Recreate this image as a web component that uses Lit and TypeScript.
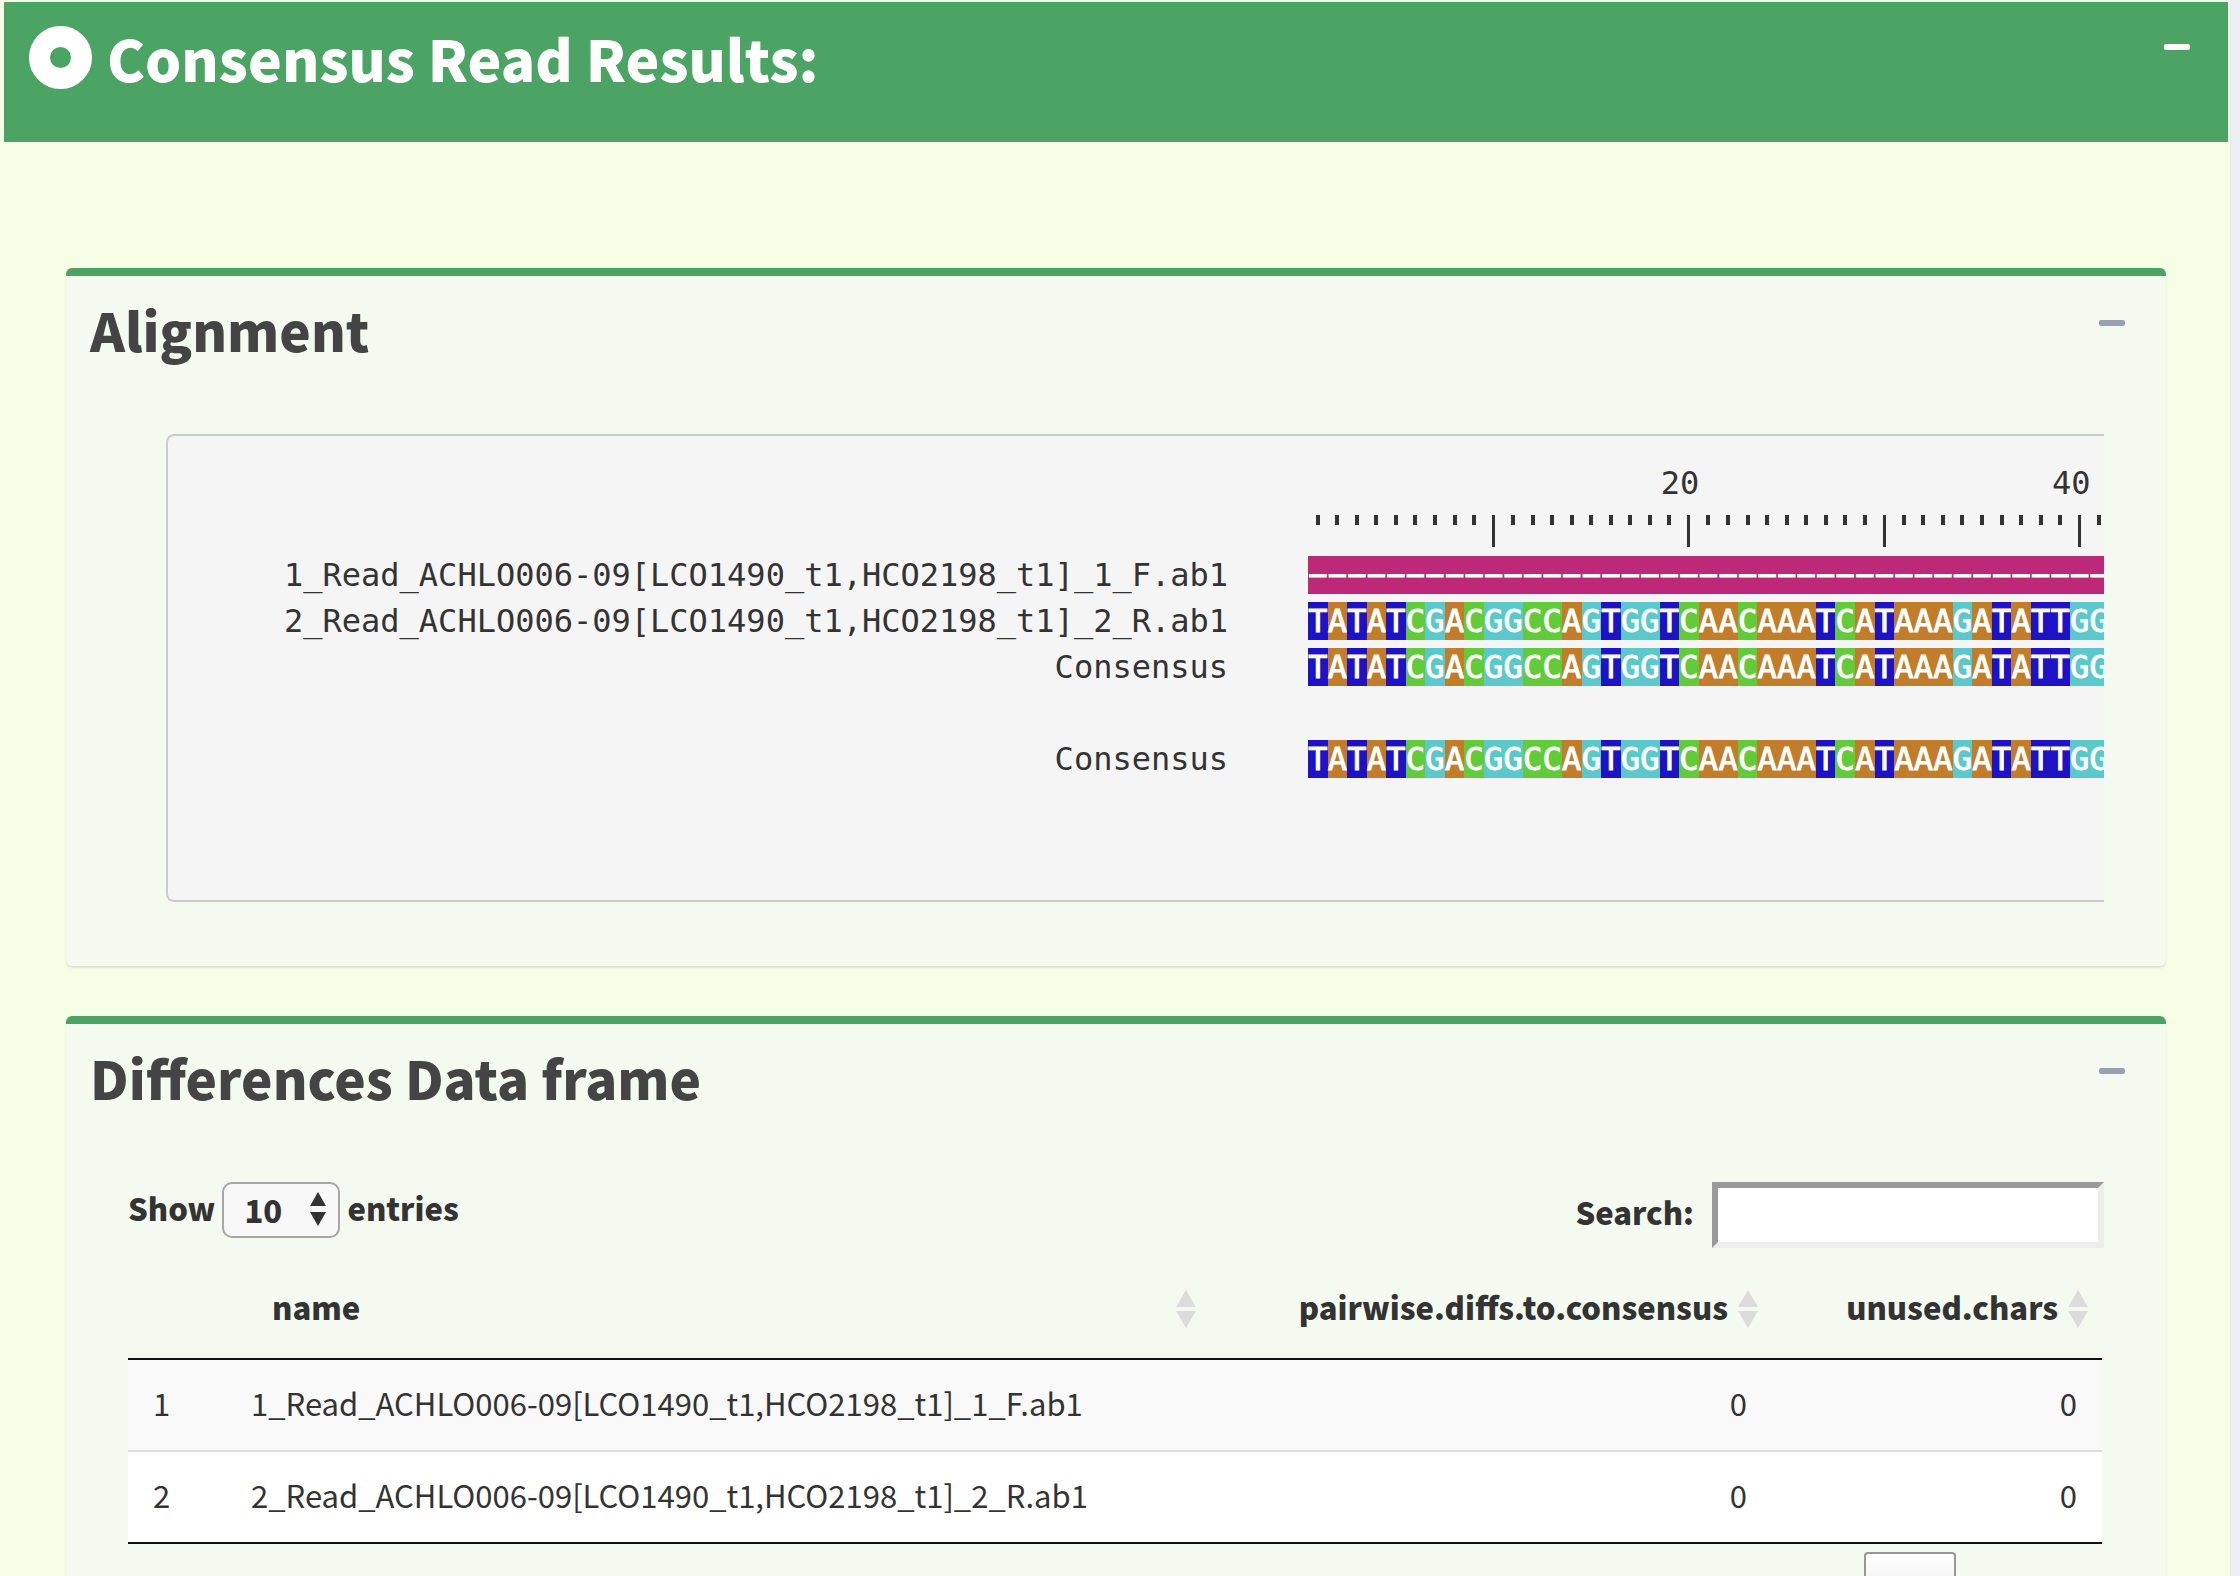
import { LitElement, html, css, svg } from "lit";
import { customElement, property } from "lit/decorators.js";

const SEQUENCE = "TATATCGACGGCCAGTGGTCAACAAATCATAAAGATATTGG";
const GAP = "−";

interface Track {
  label: string;
  bases: string;
}

const TRACKS: Track[] = [
  { label: "1_Read_ACHLO006-09[LCO1490_t1,HCO2198_t1]_1_F.ab1", bases: GAP.repeat(SEQUENCE.length) },
  { label: "2_Read_ACHLO006-09[LCO1490_t1,HCO2198_t1]_2_R.ab1", bases: SEQUENCE },
  { label: "Consensus", bases: SEQUENCE },
  { label: "", bases: "" },
  { label: "Consensus", bases: SEQUENCE },
];

const ROWS = [
  { id: 1, name: "1_Read_ACHLO006-09[LCO1490_t1,HCO2198_t1]_1_F.ab1", diffs: 0, unused: 0 },
  { id: 2, name: "2_Read_ACHLO006-09[LCO1490_t1,HCO2198_t1]_2_R.ab1", diffs: 0, unused: 0 },
];

const sortIcon = html`<svg class="sort" viewBox="0 0 20 38" aria-hidden="true">
  ${svg`<path d="M10 0 L20 17 H0 Z M0 21 H20 L10 38 Z" fill="#dcdcdc" />`}
</svg>`;

@customElement("result-card")
export class ResultCard extends LitElement {
  @property() heading = "";

  static styles = css`
    :host {
      display: block;
      border-top: 8px solid #4ba364;
      border-radius: 6px;
      background: #f4faf0;
      box-shadow: 0 2px 2px rgba(0, 0, 0, 0.1);
    }
    .head {
      display: flex;
      justify-content: space-between;
      align-items: flex-start;
      padding: 21px 41px 0 24px;
    }
    .title {
      margin: 0;
      font-size: 53px;
      line-height: 64px;
      font-weight: 900;
      color: #444;
    }
    .toggle {
      display: flex;
      padding: 23px 0;
      border: 0;
      background: none;
    }
    .bar {
      width: 26px;
      height: 6px;
      border-radius: 2px;
      background: #98a0b5;
    }
    .body {
      padding: 73px 62px 64px;
    }
  `;

  render() {
    return html`
      <div class="head">
        <h2 class="title">${this.heading}</h2>
        <button class="toggle" aria-label="Collapse"><span class="bar"></span></button>
      </div>
      <div class="body"><slot></slot></div>
    `;
  }
}

@customElement("alignment-view")
export class AlignmentView extends LitElement {
  static styles = css`
    :host {
      display: block;
      margin-left: 38px;
      overflow: hidden;
    }
    .frame {
      display: grid;
      grid-template-columns: 1060px 1fr;
      grid-auto-rows: 38px;
      gap: 8px 80px;
      padding: 28px 0 122px;
      border: 2px solid #ccc;
      border-right: 0;
      border-radius: 8px 0 0 8px;
      background: #f5f5f5;
      color: #333;
      font: 32px/38px "DejaVu Sans Mono", monospace;
    }
    .label {
      text-align: right;
      white-space: nowrap;
    }
    .track {
      display: grid;
      grid-template-columns: repeat(41, 1fr);
      width: 801px;
    }
    .base {
      text-align: center;
      color: #fff;
      -webkit-text-stroke: 1px #fff;
    }
    .T { background: #1d12c4; }
    .A { background: #c17d2a; }
    .C { background: #62cb3a; }
    .G { background: #5bc9cc; }
    .gap { background: #bd2878; }
    .number {
      display: flex;
      justify-content: flex-end;
    }
    .tick {
      justify-self: center;
      width: 4px;
      height: 10px;
      margin-top: 5px;
      background: #333;
    }
    .tick.major {
      width: 3px;
      height: 32px;
    }
  `;

  render() {
    const positions = [...SEQUENCE].map((_, i) => i + 1);
    return html`
      <div class="frame">
        <span></span>
        <div class="track">
          ${positions.map((p) => html`<span class="number">${p % 20 === 0 ? p : ""}</span>`)}
        </div>
        <span></span>
        <div class="track">
          ${positions.map((p) => html`<span class="tick ${p % 10 === 0 ? "major" : ""}"></span>`)}
        </div>
        ${TRACKS.map(
          (t) => html`
            <span class="label">${t.label}</span>
            <div class="track">
              ${[...t.bases].map((b) => html`<span class="base ${b === GAP ? "gap" : b}">${b}</span>`)}
            </div>
          `
        )}
      </div>
    `;
  }
}

@customElement("differences-table")
export class DifferencesTable extends LitElement {
  static styles = css`
    :host {
      display: block;
      color: #333;
      font-size: 31px;
      line-height: 48px;
    }
    .tools {
      display: flex;
      justify-content: space-between;
      align-items: flex-start;
      font-weight: 900;
    }
    .length {
      display: flex;
      gap: 7px;
      line-height: 52px;
    }
    .picker {
      position: relative;
      display: flex;
    }
    .select {
      appearance: none;
      width: 118px;
      height: 56px;
      padding: 0 20px;
      border: 2px solid #a6a6a6;
      border-radius: 10px;
      background: #f8f8f8;
      color: #333;
      font: inherit;
    }
    .arrows {
      position: absolute;
      top: 10px;
      right: 14px;
      width: 16px;
      height: 34px;
      pointer-events: none;
    }
    .search {
      display: flex;
      gap: 18px;
      line-height: 60px;
    }
    .input {
      box-sizing: border-box;
      width: 392px;
      height: 66px;
      padding: 0 8px;
      border: 6px solid;
      border-color: #9a9a9a #ededed #ededed #9a9a9a;
      background: #fff;
      font: inherit;
    }
    .wrap {
      padding-right: 2px;
    }
    .table {
      width: 100%;
      table-layout: fixed;
      border-collapse: separate;
      border-spacing: 0;
      border-bottom: 2px solid #111;
    }
    .id { width: 98px; }
    .diffs { width: 562px; }
    .unused { width: 330px; }
    .th {
      padding: 35px 14px 27px 46px;
      border-bottom: 2px solid #111;
      box-sizing: border-box;
    }
    .th.id,
    .th.diffs,
    .th.unused {
      padding-left: 0;
    }
    .order {
      display: flex;
      justify-content: space-between;
      align-items: center;
      gap: 10px;
      width: 100%;
      padding: 0;
      border: 0;
      background: none;
      color: inherit;
      font: inherit;
      font-weight: 900;
    }
    .diffs .order,
    .unused .order {
      justify-content: flex-end;
    }
    .sort {
      width: 20px;
      height: 38px;
      margin-top: 4px;
    }
    .td {
      padding: 19px 25px 23px;
      background: #f9f9f9;
    }
    .row + .row .td {
      border-top: 2px solid #ddd;
      background: #fff;
    }
    .num {
      text-align: right;
    }
    .pager {
      display: flex;
      justify-content: flex-end;
      padding-top: 8px;
    }
    .page {
      box-sizing: border-box;
      padding: 24px 36px;
      border: 2px solid transparent;
      border-radius: 4px;
      background: none;
      color: #333;
      font: inherit;
    }
    .page.current {
      width: 92px;
      border-color: #979797;
      background: linear-gradient(#fff, #dcdcdc);
    }
    .page.next {
      width: 148px;
    }
  `;

  render() {
    return html`
      <div class="tools">
        <div class="length">
          <label for="length">Show</label>
          <span class="picker">
            <select class="select" id="length">
              <option>10</option>
              <option>25</option>
              <option>50</option>
              <option>100</option>
            </select>
            <svg class="arrows" viewBox="0 0 16 34" aria-hidden="true">
              <path d="M8 0 L16 14 H0 Z M0 20 H16 L8 34 Z" fill="#333" />
            </svg>
          </span>
          <span>entries</span>
        </div>
        <div class="search">
          <label for="search">Search:</label>
          <input class="input" id="search" type="search" />
        </div>
      </div>
      <div class="wrap">
        <table class="table">
          <thead>
            <tr>
              <th class="th id"></th>
              <th class="th"><button class="order">name ${sortIcon}</button></th>
              <th class="th diffs"><button class="order">pairwise.diffs.to.consensus ${sortIcon}</button></th>
              <th class="th unused"><button class="order">unused.chars ${sortIcon}</button></th>
            </tr>
          </thead>
          <tbody>
            ${ROWS.map(
              (r) => html`
                <tr class="row">
                  <td class="td">${r.id}</td>
                  <td class="td">${r.name}</td>
                  <td class="td num">${r.diffs}</td>
                  <td class="td num">${r.unused}</td>
                </tr>
              `
            )}
          </tbody>
        </table>
      </div>
      <div class="pager">
        <button class="page current">1</button>
        <button class="page next">Next</button>
      </div>
    `;
  }
}

@customElement("app-root")
export class AppRoot extends LitElement {
  static styles = css`
    :host {
      display: block;
      height: 100vh;
      overflow: hidden;
      background: #ecf0f5;
      font-family: "Noto Sans CJK SC", "Noto Sans", sans-serif;
    }
    .panel {
      min-height: 100%;
      box-sizing: border-box;
      margin-right: 10px;
      padding: 2px 2px 0 4px;
      border-radius: 0 6px 0 0;
      background: #f6ffe6;
      box-shadow: 0 2px 2px rgba(0, 0, 0, 0.1);
    }
    .banner {
      display: flex;
      align-items: flex-start;
      gap: 15px;
      padding: 19px 38px 49px 25px;
      background: #4ba364;
      color: #fff;
    }
    .ring {
      width: 63px;
      height: 63px;
      margin-top: 5px;
    }
    .title {
      flex: 1;
      margin: 0;
      font-size: 57px;
      line-height: 72px;
      font-weight: 900;
    }
    .toggle {
      display: flex;
      padding: 23px 0;
      border: 0;
      background: none;
    }
    .bar {
      width: 26px;
      height: 6px;
      border-radius: 2px;
      background: #fff;
    }
    .cards {
      display: flex;
      flex-direction: column;
      gap: 50px;
      padding: 126px 62px 40px;
    }
  `;

  render() {
    return html`
      <main class="panel">
        <header class="banner">
          <svg class="ring" viewBox="0 0 63 63" aria-hidden="true">
            <circle cx="31.5" cy="31.5" r="21" fill="none" stroke="#fff" stroke-width="21" />
          </svg>
          <h1 class="title">Consensus Read Results:</h1>
          <button class="toggle" aria-label="Collapse"><span class="bar"></span></button>
        </header>
        <div class="cards">
          <result-card heading="Alignment"><alignment-view></alignment-view></result-card>
          <result-card heading="Differences Data frame"><differences-table></differences-table></result-card>
        </div>
      </main>
    `;
  }
}
